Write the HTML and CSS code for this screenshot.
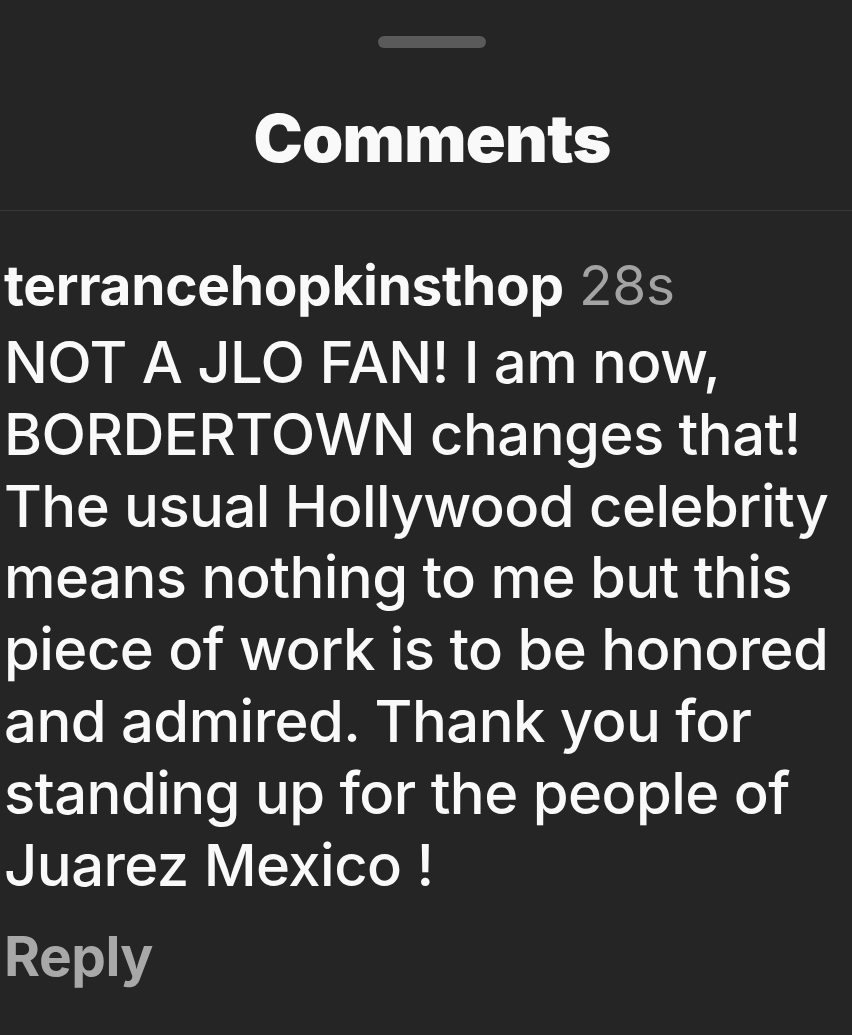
FILE: index.html
```html
<!DOCTYPE html>
<html>
<head>
  <title>Comments</title>
  <link rel="stylesheet" href="styles.css">
</head>
<body>
  <div class="sheet">
    <div class="sheet-header">
      <div class="handle"></div>
      <h1>Comments</h1>
    </div>
    <div class="comment">
      <div class="comment-meta">
        <span class="username">terrancehopkinsthop</span>
        <span class="time">28s</span>
      </div>
      <p class="comment-text">NOT A JLO FAN! I am now, BORDERTOWN changes that! The usual Hollywood celebrity means nothing to me but this piece of work is to be honored and admired. Thank you for standing up for the people of Juarez Mexico !</p>
      <div class="reply">Reply</div>
    </div>
  </div>
</body>
</html>
```

FILE: styles.css
```css
body {
  margin: 0;
  padding: 0;
  background-color: #252525;
  font-family: Inter, "Liberation Sans", sans-serif;
  color: #f9f9f9;
}

.sheet {
  width: 852px;
  height: 1035px;
  overflow: hidden;
}

.sheet-header {
  height: 210px;
  padding-left: 12px;
  border-bottom: 1px solid #383838;
  display: flex;
  flex-direction: column;
  align-items: center;
}

.handle {
  width: 108px;
  height: 12px;
  margin-top: 36px;
  border-radius: 6px;
  background-color: #5a5a5a;
}

h1 {
  margin: 50px 0 0 0;
  font-size: 66px;
  font-weight: 900;
  letter-spacing: -0.7px;
  line-height: 80px;
}

.comment {
  padding: 0 0 0 4px;
}

.comment-meta {
  margin-top: 40px;
  font-size: 55px;
  line-height: 68px;
  letter-spacing: -0.3px;
}

.username {
  font-weight: 700;
}

.time {
  color: #a3a3a3;
}

.comment-text {
  margin: 8px 0 0 0;
  font-size: 58px;
  font-weight: 500;
  line-height: 71.8px;
  letter-spacing: -0.55px;
}

.reply {
  margin-top: 22px;
  font-size: 55px;
  font-weight: 700;
  color: #a8a8a8;
  letter-spacing: -0.5px;
}
```
